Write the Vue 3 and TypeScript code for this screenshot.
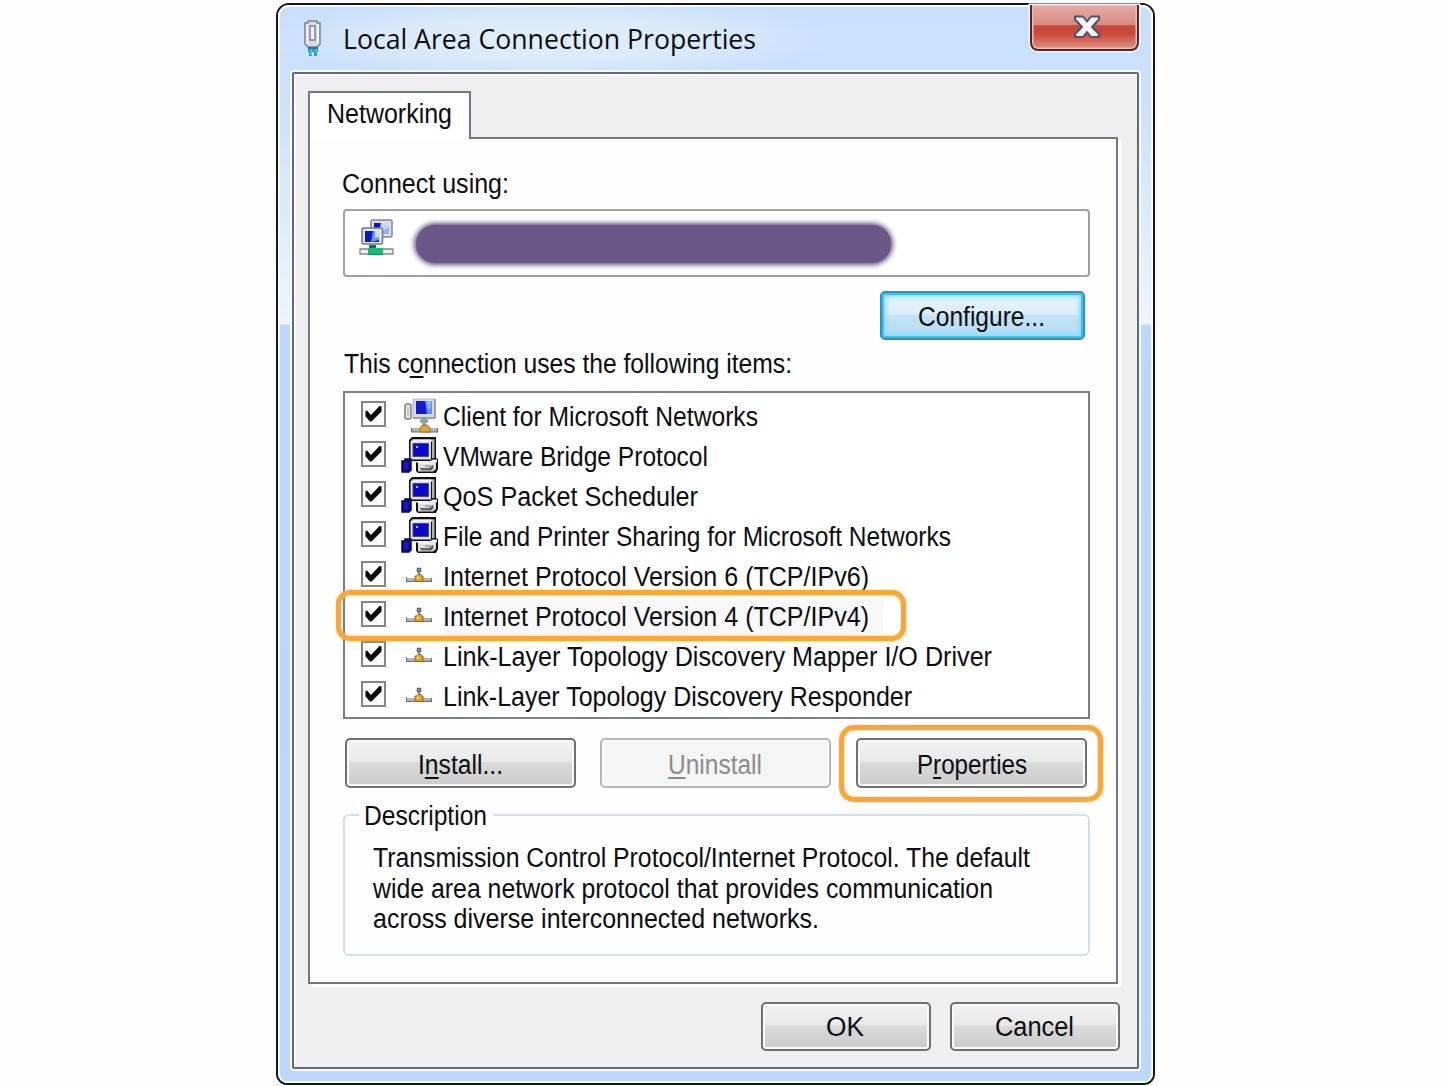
<script setup lang="ts">
import type { Directive } from 'vue'

type IconKind = 'client' | 'computer' | 'protocol'

interface ConnectionItem {
  label: string
  width: number
  icon: IconKind
  highlighted?: boolean
}

const items: ConnectionItem[] = [
  { label: 'Client for Microsoft Networks', width: 315, icon: 'client' },
  { label: 'VMware Bridge Protocol', width: 265, icon: 'computer' },
  { label: 'QoS Packet Scheduler', width: 255, icon: 'computer' },
  { label: 'File and Printer Sharing for Microsoft Networks', width: 508, icon: 'computer' },
  { label: 'Internet Protocol Version 6 (TCP/IPv6)', width: 426, icon: 'protocol' },
  { label: 'Internet Protocol Version 4 (TCP/IPv4)', width: 426, icon: 'protocol', highlighted: true },
  { label: 'Link-Layer Topology Discovery Mapper I/O Driver', width: 549, icon: 'protocol' },
  { label: 'Link-Layer Topology Discovery Responder', width: 469, icon: 'protocol' },
]

const description = [
  { text: 'Transmission Control Protocol/Internet Protocol. The default', width: 657 },
  { text: 'wide area network protocol that provides communication', width: 620 },
  { text: 'across diverse interconnected networks.', width: 446 },
]

// Condenses a label horizontally so that it occupies the given width.
const vFit: Directive<HTMLElement, number> = {
  mounted(el, binding) {
    const natural = el.getBoundingClientRect().width
    el.style.transformOrigin = '0 50%'
    el.style.transform = `scaleX(${binding.value / natural})`
    el.style.marginRight = `${binding.value - natural}px`
  },
}
</script>

<template>
  <main class="desktop">
    <section class="window">
      <div class="frame">
        <header class="titlebar">
          <svg class="plug" width="20" height="38" viewBox="0 0 20 38">
            <path d="M5 1h9v2h3v21l-3 3H5l-3-3V3h3z" fill="#d8dce7" stroke="#7b8296" stroke-width="1.5" />
            <path d="M4 4v20M15 4v20" stroke="#fafbff" stroke-width="1.4" />
            <path d="M7 6h5v14H7z" fill="#f4f5fa" stroke="#777d8f" stroke-width="1.4" />
            <path d="M5 27h10v5h-1v4h-3v-4H9v4H6v-4H5z" fill="#2a9fc9" />
            <path d="M5 28h10" stroke="#187397" stroke-width="1.5" />
            <path d="M8 29v6M13 29v3" stroke="#8fdcf0" stroke-width="1" />
          </svg>
          <h1 class="title"><span v-fit="413" class="t">Local Area Connection Properties</span></h1>
          <button class="close" aria-label="Close">
            <svg width="28" height="26" viewBox="0 0 28 26">
              <path d="M2 2.5h8l4 5 4-5h8v3l-7 7.500 7 7v3h-8l-4-5-4 5H2v-3l7-7-7-7.500z" fill="#f5f5f6" stroke="#4c5365" stroke-width="2" stroke-linejoin="round" />
            </svg>
          </button>
        </header>

        <div class="client">
          <div class="tabs">
            <div class="tab"><span v-fit="125" class="t">Networking</span></div>
          </div>
          <div class="panel">
            <div class="caption"><span v-fit="167" class="t">Connect using:</span></div>
            <div class="adapter">
              <svg width="36" height="38" viewBox="0 0 36 38">
                <rect x="12" y="1" width="21" height="17" rx="1.500" fill="#dcdde3" stroke="#85868f" stroke-width="1.5" />
                <path d="M15 4h15v11H15z" fill="#8fb0f4" />
                <path d="M15 4h7l-2 6h-5z" fill="#0a16bd" />
                <path d="M22 4h8v4l-8 5z" fill="#c3d8fa" />
                <rect x="3" y="9" width="20.500" height="16" rx="1.500" fill="#e3e3eb" stroke="#777985" stroke-width="1.6" />
                <path d="M6 12h14v11H6z" fill="#0b16c5" />
                <path d="M14 12h6v9l-8 2z" fill="#6c94ef" />
                <path d="M16 12h4v6l-4 1z" fill="#c6dcff" />
                <path d="M10 26h7v4h-7z" fill="#176d4a" />
                <path d="M1 30h33v5H1z" fill="#eee" stroke="#85858a" stroke-width="1.3" />
                <path d="M9 29h15v7H9z" fill="#14bd7c" />
                <path d="M9 35.500h15" stroke="#168a5d" />
              </svg>
              <div class="redaction"></div>
            </div>
            <div class="configure-row">
              <button class="btn focus"><span v-fit="127" class="t">Configure...</span></button>
            </div>
            <div class="caption list-caption">
              <span v-fit="448" class="t">This c<u>o</u>nnection uses the following items:</span>
            </div>

            <ul class="list">
              <li v-for="item in items" :key="item.label" class="row" :class="{ highlighted: item.highlighted }">
                <span class="check">
                  <svg width="21" height="22" viewBox="0 0 21 22">
                    <path d="M2.500 8l1.500-0.500 4 4.500L16.500 3l2 0.500v5L8.500 18.500H7L2.500 13.500z" fill="#080808" />
                  </svg>
                </span>
                <svg v-if="item.icon === 'client'" class="icon" width="38" height="38" viewBox="0 0 38 38">
                  <rect x="4" y="8" width="6" height="15" rx="2" fill="#e7e7ea" stroke="#7d7d82" stroke-width="1.500" />
                  <path d="M7 11v9" stroke="#aaa" />
                  <path d="M12 3h22v19H12z" fill="#d7d7de" stroke="#b8b8c0" />
                  <path d="M34 3v19H12" fill="none" stroke="#8a8a93" stroke-width="1.400" />
                  <path d="M15 5h16v13H15z" fill="#101bd0" />
                  <path d="M24 5h7v13h-5z" fill="#668fee" />
                  <path d="M26 5h4l-1 8h-2z" fill="#99bbfb" />
                  <path d="M19 25h8M23 22v8" stroke="#8a9ea8" stroke-width="3.500" />
                  <path d="M10 34h27" stroke="#b5b5b5" stroke-width="4" />
                  <path d="M10 36h27M10.500 32v4M36.500 32v4" stroke="#65656a" stroke-width="1" />
                  <path d="M19 36v-4l3-3h4l3 3v4z" fill="#e6a42c" stroke="#a56a13" />
                </svg>
                <svg v-else-if="item.icon === 'computer'" class="icon" width="38" height="38" viewBox="0 0 38 38">
                  <path d="M11 1h24v21l2 1v10l-2 4H17l-2-2v-9l-7-2V4z" fill="#111" />
                  <path d="M11.500 3.500H30v20H9.500V5.500z" fill="#dcdcdc" />
                  <path d="M11.500 3.500H33l-2 2H11z" fill="#f6f6f6" />
                  <path d="M31 5l2.500-2v19H31z" fill="#b4b4b4" />
                  <path d="M12 7.500h15.500v13H12z" fill="#0909cc" stroke="#4c4c66" stroke-width="1" />
                  <path d="M15 10h2v2h-2z" fill="#9fc9ff" />
                  <path d="M12 25h17l3-1.500h4V26l-4 3H17v-2z" fill="#f2f2f2" />
                  <path d="M17 28h14l4-3v8l-3 2.500H17z" fill="#dedede" />
                  <path d="M19 32.500h9l4-3v3l-2 1.500H21zM24 30h6" fill="#666" stroke="#555" stroke-width="0.800" />
                  <path d="M1 25h3v-2h6v11l-2 2H1z" fill="#0909a9" stroke="#08082e" stroke-width="1.500" />
                  <path d="M5 26v7" stroke="#1c1cd0" stroke-width="3" />
                </svg>
                <svg v-else class="icon" width="38" height="38" viewBox="0 0 38 38">
                  <path d="M5 22h26v4H5z" fill="#b4b4b4" />
                  <path d="M5 25.500h26M5.500 21v5M30.500 22v4" stroke="#6c6c72" />
                  <path d="M16.500 12.500h3v3h-3zM18 15v4" fill="#a9b5bf" stroke="#56697a" stroke-width="1.500" />
                  <path d="M14 25.500V20h2l1-1.500h3l1 1.500h1v5.500z" fill="#dca126" stroke="#9b6414" />
                  <path d="M17 20v3" stroke="#ffe68c" stroke-width="1.500" />
                </svg>
                <span class="item-label"><span v-fit="item.width" class="t">{{ item.label }}</span></span>
              </li>
            </ul>

            <div class="actions">
              <button class="btn"><span v-fit="85" class="t">I<u>n</u>stall...</span></button>
              <button class="btn disabled" disabled><span v-fit="94" class="t"><u>U</u>ninstall</span></button>
              <div class="marked">
                <button class="btn"><span v-fit="110" class="t">P<u>r</u>operties</span></button>
              </div>
            </div>

            <section class="group">
              <h2 class="legend"><span v-fit="123" class="t">Description</span></h2>
              <p v-for="line in description" :key="line.text" class="line">
                <span v-fit="line.width" class="t">{{ line.text }}</span>
              </p>
            </section>
          </div>

          <footer class="footer">
            <button class="btn"><span v-fit="38" class="t">OK</span></button>
            <button class="btn"><span v-fit="79" class="t">Cancel</span></button>
          </footer>
        </div>
      </div>
    </section>
  </main>
</template>

<style>
body {
  margin: 0;
  background: #fefefe;
}
</style>

<style scoped>
*,
*::after {
  box-sizing: border-box;
}
.desktop {
  height: 1086px;
  padding: 3px 0 0 276px;
  overflow: hidden;
  font: 27px/30px "Liberation Sans", Arial, sans-serif;
  color: #0c0c12;
}
.t {
  display: inline-block;
  white-space: nowrap;
}
.t u {
  text-decoration-thickness: 2px;
  text-underline-offset: 3px;
  text-decoration-skip-ink: none;
}
.window {
  width: 879px;
  height: 1082px;
  border: 2px solid #15171b;
  border-radius: 13px 13px 11px 11px;
  background: #fff;
}
.frame {
  height: 100%;
  border: 2px solid #f8fbff;
  border-radius: 11px 11px 9px 9px;
  padding: 0 12px 10px;
  background:
    radial-gradient(ellipse 290px 40px at 270px 32px, #e0eefd 0, #dbebfc 50%, transparent 100%) no-repeat,
    linear-gradient(#c7dffa 0, #c9e1fb 90px, #eaf4fe 300px, #eef6fe 317px, #b9d9fd 318px, #bad9fc 100%);
}
.titlebar {
  display: flex;
  height: 63px;
  align-items: flex-start;
}
.plug {
  margin: 13px 0 0 11px;
}
.title {
  flex: 1;
  margin: 14px 0 0 20px;
  font: 400 27px/36px "Open Sans", "Noto Sans", sans-serif;
}
.close {
  display: flex;
  justify-content: center;
  align-items: center;
  width: 109px;
  height: 46px;
  margin: -2px 0 0 0;
  padding: 0 0 0 4px;
  border: 2px solid #51272b;
  border-top: 0;
  border-radius: 0 0 8px 8px;
  background: linear-gradient(#e6aaa5 0, #d98a82 45%, #c6483a 47%, #c94a3b 65%, #df9182 100%);
  box-shadow: inset 0 0 0 1.500px #eebbb4, 0 0 0 1.500px #f3f8ff;
}
.client {
  height: 997px;
  margin: 2px 0 0;
  border: 2px solid #626a79;
  border-radius: 2px;
  padding: 17px 17px 0 14px;
  background: #efefef;
  box-shadow: 0 0 0 2px #f6faff, inset 2px 2px 0 #fafafa;
}
.tabs {
  display: flex;
}
.tab {
  position: relative;
  z-index: 1;
  width: 163px;
  height: 48px;
  margin-bottom: -2px;
  padding: 6px 0 0 17px;
  border: 2px solid #757780;
  border-bottom: 0;
  background: #fff;
}
.panel {
  width: 810px;
  height: 847px;
  border: 2px solid #757780;
  padding: 30px 26px 0 33px;
  background: #fefefe;
  box-shadow: 4px 3px 0 #fbfbfb;
}
.caption {
  height: 30px;
  margin-left: -1px;
}
.adapter {
  display: flex;
  height: 68px;
  margin-top: 10px;
  border: 2px solid #a1a1a3;
  border-radius: 4px;
  padding: 8px 0 0 14px;
  background: #fff;
}
.redaction {
  width: 475px;
  height: 38px;
  margin: 6px 0 0 21px;
  border-radius: 19px;
  background: #6b5786;
  box-shadow: 0 0 5px 2px #6b5786;
}
.configure-row {
  display: flex;
  justify-content: flex-end;
  margin: 14px 5px 0 0;
}
.btn {
  display: flex;
  justify-content: center;
  align-items: center;
  height: 50px;
  padding: 2px 0 0;
  border: 2px solid #707070;
  border-radius: 5px;
  background: linear-gradient(#f3f3f3 0, #e9e9e9 47%, #dadada 49%, #cbcbcb 100%);
  box-shadow: inset 0 0 0 2px #fbfbfb;
  color: inherit;
  font: inherit;
}
.btn.focus {
  width: 205px;
  height: 49px;
  padding-right: 2px;
  border-color: #2f91bf;
  background: linear-gradient(#e8f5fc 0, #d8eefa 47%, #c2e3f5 49%, #b5ddf4 100%);
  box-shadow: inset 0 0 0 2px #39c3f2, inset 0 0 4px 4px #8cdcf7;
}
.btn.disabled {
  border-color: #b4b6b8;
  background: #f5f5f5;
  color: #8b8b8b;
}
.list-caption {
  margin: 9px 0 0 1px;
}
.list {
  height: 328px;
  margin: 12px 0 0;
  border: 2px solid #7b7d84;
  padding: 4px 0 0 16px;
  list-style: none;
  background: #fff;
}
.row {
  position: relative;
  display: flex;
  height: 40px;
}
.check {
  width: 25px;
  height: 26px;
  margin-top: 4px;
  border: 2px solid #858585;
  background: #fff;
}
.check svg {
  display: block;
}
.icon {
  margin: -1px 0 0 15px;
  overflow: visible;
}
.item-label {
  margin: 5px 0 0 4px;
}
.row.highlighted::after {
  content: "";
  position: absolute;
  z-index: 1;
  left: -25px;
  top: -7px;
  width: 570px;
  height: 51px;
  border: 5px solid #fba636;
  border-radius: 14px;
  box-shadow: 0 0 2px #fcbc68, inset 0 0 2px #fcbc68;
}
.row.highlighted .item-label {
  height: 36px;
  margin-top: 2px;
  padding: 3px 14px 0 0;
  background: #f8f8f8;
}
.actions {
  display: flex;
  margin: 19px 0 0 2px;
}
.actions .btn {
  width: 231px;
  padding-top: 3px;
}
.actions .disabled {
  margin: 0 25px 0 24px;
  padding-right: 1px;
}
.marked {
  position: relative;
}
.marked::after {
  content: "";
  position: absolute;
  left: -17px;
  top: -13px;
  width: 264px;
  height: 77px;
  border: 5px solid #fba636;
  border-radius: 15px;
  box-shadow: 0 0 2px #fcbc68, inset 0 0 2px #fcbc68;
}
.group {
  height: 142px;
  margin-top: 26px;
  border: 2px solid #d0dfe8;
  border-radius: 6px;
  padding: 0 0 0 28px;
}
.legend {
  width: 134px;
  height: 30px;
  margin: -15px 0 12px -14px;
  padding-left: 5px;
  background: #fefefe;
  font: inherit;
}
.line {
  height: 30.700px;
  margin: 0;
}
.footer {
  display: flex;
  justify-content: flex-end;
  gap: 19px;
  margin-top: 18px;
}
.footer .btn {
  width: 170px;
  height: 49px;
  padding: 0 2px 0 0;
}
</style>
